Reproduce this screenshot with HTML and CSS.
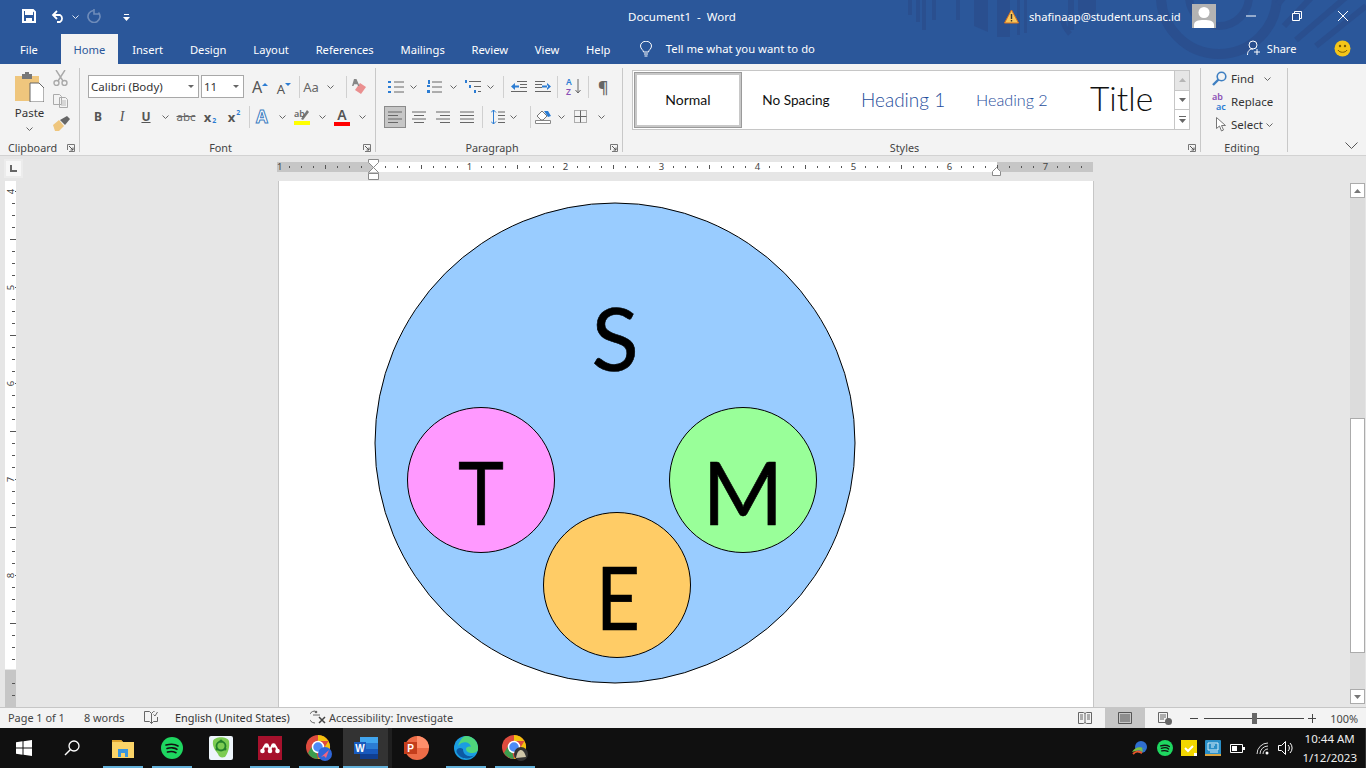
FILE: index.html
```html
<!DOCTYPE html>
<html lang="en">
<head>
  <meta charset="UTF-8" />
  <title>Document1 - Word</title>
  <link rel="stylesheet" href="styles.css">
</head>
<body>
  <svg class="sprite">
    <symbol id="chev" viewBox="0 0 7 4"><path d="M.5.5l3 3 3-3" fill="none" stroke="#666"/></symbol>
    <symbol id="launch" viewBox="0 0 8 8"><path d="M.5 6V.5H7.500V7.500H2" fill="none" stroke="#777"/><path d="M2 2l4 4M6 3.500V6H3.500" fill="none" stroke="#555"/></symbol>
    <symbol id="lines" viewBox="0 0 14 12"><path d="M0 1h14M0 4.500h14M0 8h14M0 11.500h14" stroke="#666"/></symbol>
  </svg>

  <!-- title bar + tabs -->
  <header class="top">
    <svg class="top-art" viewBox="0 0 1366 64">
      <g fill="#2a4f8f">
        <path d="M908 0h4v15h-4zM916 0h4v22h-4zM922 0h4v30h-4zM932 0h4v20h-4zM956 0h4v20h-4zM974 0h14v32l-14-6zM997 0h13v37h-13zM1017 0h3v35h-3zM1024 0h3v33h-3zM1068 0h6v30h-6z"/>
        <path d="M1078 0h18v10a9 9 0 0 1-18 0z"/>
      </g>
      <g fill="none" stroke="#2a4f8f">
        <circle cx="1219" cy="-4" r="58" stroke-width="10"/>
        <circle cx="1219" cy="-4" r="30" stroke-width="8"/>
        <path d="M1296 40l70-60M1284 26l44-46M1316 46l50-40M1290-10l-12 14" stroke-width="6"/>
        <path d="M1062 16a30 30 0 0 0 8 18" stroke-width="5"/>
      </g>
    </svg>
    <div class="titlebar">
      <div class="qat">
        <svg class="q-save" width="14" height="14" viewBox="0 0 14 14"><path d="M1 1h10l2 2v10H1z" fill="none" stroke="#fff" stroke-width="2"/><path d="M3 2h8v4H3zM4 9h6v4H4z" fill="#fff"/></svg>
        <svg class="q-undo" width="14" height="13" viewBox="0 0 14 13"><path d="M2 5h7a4 4 0 0 1 0 7H6" fill="none" stroke="#fff" stroke-width="1.800"/><path d="M6 1L2 5l4 4" fill="none" stroke="#fff" stroke-width="1.800"/></svg>
        <svg class="q-chev" width="7" height="4"><path d="M.5.500l3 3 3-3" fill="none" stroke="#dfe6f2"/></svg>
        <svg class="q-redo" width="14" height="14" viewBox="0 0 14 14"><path d="M11.500 3.500a6 6 0 1 1-5-2" fill="none" stroke="#6f8cba" stroke-width="1.600"/><path d="M7 0v5h5" fill="none" stroke="#6f8cba" stroke-width="1.600"/></svg>
        <svg class="q-more" width="7" height="7" viewBox="0 0 7 7"><path d="M1 0h5v1H1zM0 3h7L3.500 7z" fill="#fff"/></svg>
      </div>
      <div class="doc-title">Document1&nbsp; -&nbsp; Word</div>
      <div class="account">
        <svg class="warn" width="15" height="15" viewBox="0 0 15 15"><path d="M7.500 1L14.500 14H.5z" fill="#f6c65b" stroke="#d9731f"/><path d="M6.800 5h1.400v5H6.800zM6.800 11h1.400v1.500H6.800z" fill="#333"/></svg>
        <span class="email">shafinaap@student.uns.ac.id</span>
        <div class="avatar"><svg width="24" height="24" viewBox="0 0 24 24"><circle cx="12" cy="8.500" r="5.500" fill="#fff"/><path d="M2 24v-3c0-4 4-5 10-5s10 1 10 5v3z" fill="#fff"/></svg></div>
        <div class="winbtns">
          <svg width="10" height="10" viewBox="0 0 10 10"><path d="M0 5h10" stroke="#fff"/></svg>
          <svg width="10" height="10" viewBox="0 0 10 10"><path d="M.5 2.500h7v7h-7zM2.500 2.500v-2h7v7h-2" fill="none" stroke="#fff"/></svg>
          <svg width="10" height="10" viewBox="0 0 10 10"><path d="M0 0l10 10M10 0L0 10" stroke="#fff"/></svg>
        </div>
      </div>
    </div>
    <nav class="tabs">
      <span class="tab tab-file">File</span>
      <span class="tab tab-on">Home</span>
      <span class="tab">Insert</span>
      <span class="tab">Design</span>
      <span class="tab">Layout</span>
      <span class="tab">References</span>
      <span class="tab">Mailings</span>
      <span class="tab">Review</span>
      <span class="tab">View</span>
      <span class="tab">Help</span>
      <svg class="bulb" width="14" height="16" viewBox="0 0 14 16"><path d="M4.500 11c0-2-3-3-3-6a5.500 4.800 0 0 1 11 0c0 3-3 4-3 6z" fill="none" stroke="#fff"/><path d="M5 13h4M5.500 15h3" stroke="#fff"/></svg>
      <span class="tell">Tell me what you want to do</span>
      <div class="share">
        <svg width="15" height="16" viewBox="0 0 15 16"><circle cx="6" cy="5" r="4" fill="none" stroke="#fff"/><path d="M.5 15c0-4 2-6 5.500-6M10 9v6M7 12h6" fill="none" stroke="#fff"/></svg>
        <span>Share</span>
      </div>
      <svg class="smile" width="17" height="17" viewBox="0 0 17 17"><circle cx="8.500" cy="8.500" r="8" fill="#f5c518"/><circle cx="6" cy="6" r="1.200" fill="#7a5a00"/><circle cx="11" cy="6" r="1.200" fill="#7a5a00"/><path d="M4 10c1.500 3 7.500 3 9 0" fill="none" stroke="#7a5a00"/></svg>
    </nav>
  </header>

  <!-- ribbon -->
  <section class="ribbon">
    <div class="group g-clip">
      <div class="gbody clip-body">
        <div class="paste">
          <svg width="29" height="30" viewBox="0 0 29 30"><path d="M0 4h24v25H0z" fill="#efc67d"/><path d="M7 2h10v5H7z" fill="#777"/><path d="M10 0h4v3h-4z" fill="#777"/><path d="M15 11h9l5 5v14H15z" fill="#fff" stroke="#666"/></svg>
          <span class="paste-lb">Paste</span>
          <svg width="7" height="4"><use href="#chev"/></svg>
        </div>
        <div class="clip-tools">
          <svg width="15" height="16" viewBox="0 0 15 16"><path d="M3 0l7 11M12 0L5 11" stroke="#a9a9a9" stroke-width="1.400"/><circle cx="3.500" cy="13" r="2.500" fill="none" stroke="#a9a9a9" stroke-width="1.400"/><circle cx="11.500" cy="13" r="2.500" fill="none" stroke="#a9a9a9" stroke-width="1.400"/></svg>
          <svg width="15" height="14" viewBox="0 0 15 14"><path d="M.5.500h6l2 2v8h-8zM6.500 3.500h6l2 2v8h-8z" fill="#f3f3f3" stroke="#aaa"/><path d="M8 7h5M8 9h5M8 11h5" stroke="#bbb"/></svg>
          <svg width="17" height="15" viewBox="0 0 17 15"><path d="M0 9l6-5 5 6-5 5H2z" fill="#efc67d"/><path d="M7 4l7-4 3 3-5 6z" fill="#666"/></svg>
        </div>
      </div>
      <div class="glabel"><span>Clipboard</span><svg width="8" height="8"><use href="#launch"/></svg></div>
    </div>

    <div class="group g-font">
      <div class="gbody">
        <div class="row font1">
          <div class="combo combo-font"><span>Calibri (Body)</span><i class="drop"></i></div>
          <div class="combo combo-size"><span>11</span><i class="drop"></i></div>
          <div class="btn w24 m4 glyph-a">A<sup class="up"></sup></div>
          <div class="btn w24 glyph-a small">A<sup class="dn"></sup></div>
          <i class="sep"></i>
          <div class="btn w22 aa">Aa</div>
          <svg class="cv" width="7" height="4"><use href="#chev"/></svg>
          <i class="sep m12"></i>
          <div class="btn w24">
            <svg width="16" height="16" viewBox="0 0 16 16"><path d="M9 4l6 4-5 7-6-4z" fill="#ea8f8f"/><path d="M3 0h2.500l3 7H7L6.300 5.300H3.200L2.500 7H1z" fill="#888"/></svg>
          </div>
        </div>
        <div class="row row2 font2">
          <div class="btn w24 bold">B</div>
          <div class="btn w24 ital">I</div>
          <div class="btn w24 und">U</div>
          <svg class="cv cv-n" width="7" height="4"><use href="#chev"/></svg>
          <div class="btn w24 strike">abc</div>
          <div class="btn w24 bold subx">x<sub>2</sub></div>
          <div class="btn w24 bold subx">x<sup>2</sup></div>
          <i class="sep"></i>
          <div class="btn w24 fx">A</div>
          <svg class="cv" width="7" height="4"><use href="#chev"/></svg>
          <div class="btn w24 m4">
            <svg width="16" height="17" viewBox="0 0 16 17"><path d="M0 13h16v4H0z" fill="#ffff00"/><path d="M7 11L13 2l2 2-6 8z" fill="#777"/><text x="0" y="9" class="ic-ab">ab</text></svg>
          </div>
          <svg class="cv" width="7" height="4"><use href="#chev"/></svg>
          <div class="btn w24 m4 colora">A<i></i></div>
          <svg class="cv" width="7" height="4"><use href="#chev"/></svg>
        </div>
      </div>
      <div class="glabel"><span>Font</span><svg width="8" height="8"><use href="#launch"/></svg></div>
    </div>

    <div class="group g-para">
      <div class="gbody">
        <div class="row para1">
          <svg class="p-ic" width="16" height="14" viewBox="0 0 16 14"><path d="M0 1h3v2H0zM0 6h3v2H0zM0 11h3v2H0z" fill="#2b7cd3"/><path d="M6 2h10M6 7h10M6 12h10" stroke="#666"/></svg>
          <svg class="cv cv6" width="7" height="4"><use href="#chev"/></svg>
          <svg class="p-ic m10" width="15" height="14" viewBox="0 0 15 14"><path d="M1 0h2v4H1zM0 5h3v2H0zM0 10h3v3H0z" fill="#2b7cd3"/><path d="M5 2h10M5 7h10M5 12h10" stroke="#666"/></svg>
          <svg class="cv m8" width="7" height="4"><use href="#chev"/></svg>
          <svg class="p-ic m8" width="17" height="14" viewBox="0 0 17 14"><path d="M0 0h2v3H0zM4 5h2v3H4zM9 10h2v3H9z" fill="#2b7cd3"/><path d="M4 1.500h12M9 6.500h7M13 11.500h3" stroke="#666"/></svg>
          <svg class="cv" width="7" height="4"><use href="#chev"/></svg>
          <i class="sep m9"></i>
          <svg class="p-ic m7" width="16" height="14" viewBox="0 0 16 14"><path d="M6 2h10M9 5h7M9 8h7M0 12h16" stroke="#666" transform="translate(0 -.5)"/><path d="M0 6.500l4-3.500v7zM3 5.500h5v2H3z" fill="#2b7cd3"/></svg>
          <svg class="p-ic m8" width="16" height="14" viewBox="0 0 16 14"><path d="M0 2h10M0 5h7M0 8h7M0 12h16" stroke="#666" transform="translate(0 -.5)"/><path d="M16 6.500L12 3v7zM7 5.500h6v2H7z" fill="#2b7cd3"/></svg>
          <i class="sep m6"></i>
          <div class="sort m8">
            <span class="sort-a">A</span><span class="sort-z">Z</span>
            <svg width="6" height="15" viewBox="0 0 6 15"><path d="M3 0v14M.5 11L3 14l2.500-3" fill="none" stroke="#666"/></svg>
          </div>
          <i class="sep m7"></i>
          <span class="pil">¶</span>
        </div>
        <div class="row row2 para2">
          <div class="al-on"><svg width="14" height="12"><path d="M0 1h14M0 4.500h10M0 8h14M0 11.500h10" stroke="#666"/></svg></div>
          <svg class="al" width="14" height="12"><path d="M0 1h14M2 4.500h10M0 8h14M2 11.500h10" stroke="#666"/></svg>
          <svg class="al" width="14" height="12"><path d="M0 1h14M4 4.500h10M0 8h14M4 11.500h10" stroke="#666"/></svg>
          <svg class="al" width="14" height="12"><use href="#lines"/></svg>
          <i class="sep m8"></i>
          <svg class="p-ic m8" width="14" height="16" viewBox="0 0 14 16"><path d="M2.500 1v14M0 3.500L2.500 1 5 3.500" stroke="#2b7cd3" fill="none"/><path d="M0 12.500L2.500 15 5 12.500" fill="none" stroke="#2b7cd3"/><path d="M7 3h7M7 6.500h7M7 10h7M7 13.500h7" stroke="#666"/></svg>
          <svg class="cv" width="7" height="4"><use href="#chev"/></svg>
          <i class="sep m13"></i>
          <svg class="p-ic m4" width="16" height="15" viewBox="0 0 16 15"><path d="M.5 11.500h15v3H.5z" fill="#fff" stroke="#888"/><path d="M2 7l5-5 5 5-4 4H6z" fill="#fff" stroke="#777"/><path d="M9 2h4l3 5-3 1z" fill="#2b7cd3"/></svg>
          <svg class="cv m7" width="7" height="4"><use href="#chev"/></svg>
          <svg class="p-ic m9" width="13" height="13" viewBox="0 0 13 13"><path d="M.5.500h12v12H.5z" fill="none" stroke="#666" stroke-dasharray="1 1"/><path d="M6.500.5v12M.5 6.500h12" stroke="#666"/></svg>
          <svg class="cv m11" width="7" height="4"><use href="#chev"/></svg>
        </div>
      </div>
      <div class="glabel"><span>Paragraph</span><svg width="8" height="8"><use href="#launch"/></svg></div>
    </div>

    <div class="group g-styles">
      <div class="gallery">
        <div class="st st-normal">Normal</div>
        <div class="st st-nospace">No Spacing</div>
        <div class="st st-h1">Heading 1</div>
        <div class="st st-h2">Heading 2</div>
        <div class="st st-title">Title</div>
        <div class="gal-scroll">
          <span class="gs gs-off"><svg width="7" height="4"><path d="M0 4h7L3.500 0z" fill="#b5b5b5"/></svg></span>
          <span class="gs"><svg width="7" height="4"><path d="M0 0h7L3.500 4z" fill="#666"/></svg></span>
          <span class="gs"><svg width="7" height="7"><path d="M0 .5h7" stroke="#666"/><path d="M0 3h7L3.500 7z" fill="#666"/></svg></span>
        </div>
      </div>
      <div class="glabel"><span>Styles</span><svg width="8" height="8"><use href="#launch"/></svg></div>
    </div>

    <div class="group g-edit">
      <div class="gbody edit-body">
        <div class="ed-row">
          <svg width="15" height="15" viewBox="0 0 15 15"><circle cx="9.500" cy="5.500" r="4.300" fill="none" stroke="#3f7fc1" stroke-width="1.600"/><path d="M6.500 8.500L1 14" stroke="#3f7fc1" stroke-width="2.400"/></svg>
          <span>Find</span><svg class="ed-cv" width="7" height="4"><use href="#chev"/></svg>
        </div>
        <div class="ed-row">
          <span class="abac"><b class="ab">ab</b><b class="ac">ac</b></span>
          <span>Replace</span>
        </div>
        <div class="ed-row">
          <svg class="ed-sel" width="10" height="15" viewBox="0 0 10 15"><path d="M.5.500v11l3-2.500 2 5 2-1-2-4.500h4z" fill="#fff" stroke="#777"/></svg>
          <span>Select</span><svg class="ed-cv2" width="7" height="4"><use href="#chev"/></svg>
        </div>
      </div>
      <div class="glabel"><span>Editing</span></div>
    </div>
    <svg class="collapse" width="13" height="7" viewBox="0 0 13 7"><path d="M.5.500l6 6 6-6" fill="none" stroke="#555"/></svg>
  </section>

  <!-- document area -->
  <main class="workspace">
    <div class="ruler-row">
      <div class="tabstop"><i></i></div>
      <div class="hruler">
        <div class="hr-grey hr-grey-l"></div>
        <div class="hr-white"></div>
        <div class="hr-grey hr-grey-r"></div>
        <span class="rn n0">1</span><span class="rn n1">1</span><span class="rn n2">2</span><span class="rn n3">3</span>
        <span class="rn n4">4</span><span class="rn n5">5</span><span class="rn n6">6</span><span class="rn n7">7</span>
        <svg class="ind-l" width="11" height="21" viewBox="0 0 11 21"><path d="M.5.500h10v3L5.500 8.500.5 3.500zM5.500 8.500l5 5v.5H.5v-.5zM.5 14.500h10v6H.5z" fill="#fff" stroke="#8a8a8a"/></svg>
        <svg class="ind-r" width="9" height="9" viewBox="0 0 9 9"><path d="M4.500.5l4 4v4h-8v-4z" fill="#fff" stroke="#8a8a8a"/></svg>
      </div>
    </div>
    <div class="doc-row">
      <div class="vruler">
        <div class="vr-white">
          <span class="vn v4">4</span><span class="vn v5">5</span><span class="vn v6">6</span><span class="vn v7">7</span><span class="vn v8">8</span>
        </div>
        <div class="vr-grey"></div>
      </div>
      <div class="page">
        <svg class="stem" viewBox="279 181 814 526" width="814" height="526">
          <circle cx="615" cy="443" r="240" fill="#99ccff" stroke="#000"/>
          <ellipse cx="481" cy="480" rx="73.500" ry="72.500" fill="#ff99ff" stroke="#000"/>
          <ellipse cx="743" cy="480" rx="73.500" ry="72.500" fill="#99ff99" stroke="#000"/>
          <ellipse cx="617" cy="585" rx="73.500" ry="72.500" fill="#ffcc66" stroke="#000"/>
          <text x="615" y="371" class="letter">S</text>
          <text x="481" y="525" class="letter" textLength="46" lengthAdjust="spacingAndGlyphs">T</text>
          <text x="743" y="525" class="letter">M</text>
          <text x="618" y="630" class="letter" textLength="44" lengthAdjust="spacingAndGlyphs">E</text>
        </svg>
      </div>
      <div class="scrollbar">
        <span class="sb-btn"><svg width="7" height="4"><path d="M0 4h7L3.500 0z" fill="#777"/></svg></span>
        <div class="sb-track"><div class="sb-thumb"></div></div>
        <span class="sb-btn"><svg width="7" height="4"><path d="M0 0h7L3.500 4z" fill="#777"/></svg></span>
      </div>
    </div>
  </main>

  <!-- status bar -->
  <footer class="status">
    <span class="s-page">Page 1 of 1</span>
    <span class="s-words">8 words</span>
    <svg class="s-book" width="14" height="13" viewBox="0 0 14 13"><path d="M.5.500h5l2 2v10l-2-2h-5zM7.500 2.500l2-2h1M13.500 6v4.500h-4l-2 2" fill="none" stroke="#666"/><path d="M9.500 3.500l1.500 1.500 2.500-4" fill="none" stroke="#666"/></svg>
    <span class="s-lang">English (United States)</span>
    <svg class="s-acc" width="16" height="14" viewBox="0 0 16 14"><path d="M5 1a6 6 0 0 0 0 12" fill="none" stroke="#666"/><circle cx="6" cy="2" r="1.300" fill="#666"/><path d="M3 5h7" stroke="#666"/><path d="M9 7l6 6M15 7l-6 6" stroke="#444" stroke-width="1.500"/></svg>
    <span class="s-acc-t">Accessibility: Investigate</span>
    <div class="s-right">
      <svg class="v-read" width="14" height="12" viewBox="0 0 14 12"><path d="M.5.500h5l1.500 1 1.500-1h5v11h-5L7 10.500 5.500 11.500h-5zM7 1.500v9M2 3h3M2 5h3M2 7h3M9 3h3M9 5h3M9 7h3" fill="none" stroke="#666"/></svg>
      <div class="v-print"><svg width="14" height="12" viewBox="0 0 14 12"><path d="M.5.500h13v11H.5zM2 3h10M2 5h10M2 7h10M2 9h10" fill="none" stroke="#555"/></svg></div>
      <svg class="v-web" width="14" height="13" viewBox="0 0 14 13"><path d="M.5.500h9v10h-9zM2 3h6M2 5h6M2 7h4" fill="none" stroke="#666"/><circle cx="10.500" cy="9.500" r="3.500" fill="#666"/></svg>
      <span class="z-minus"></span>
      <div class="z-track"><i></i></div>
      <span class="z-plus"></span>
      <span class="z-val">100%</span>
    </div>
  </footer>

  <!-- taskbar -->
  <div class="taskbar">
    <div class="tb-sys">
      <svg width="16" height="16" viewBox="0 0 16 16"><path d="M0 2.300l6.500-1v6.300H0zM7.500 1.200L16 0v7.600H7.500zM0 8.500h6.500v6.300l-6.500-1zM7.500 8.500H16V16l-8.500-1.200z" fill="#fff"/></svg>
    </div>
    <div class="tb-sys">
      <svg width="16" height="16" viewBox="0 0 16 16"><circle cx="10" cy="6" r="5" fill="none" stroke="#fff" stroke-width="1.300"/><path d="M6.500 9.500L1 15" stroke="#fff" stroke-width="1.500"/></svg>
    </div>
    <div class="tb-app run">
      <svg width="22" height="20" viewBox="0 0 22 20"><path d="M0 2h9l2 2h11v16H0z" fill="#fbd467"/><path d="M0 2h9l2 2H0z" fill="#e0a52e"/><path d="M6 11h10v8h-3v-4H9v4H6z" fill="#3a96dd"/></svg>
    </div>
    <div class="tb-app run">
      <svg width="22" height="22" viewBox="0 0 22 22"><circle cx="11" cy="11" r="11" fill="#1ed760"/><path d="M5 8c4-1 9-1 12 1M6 11.500c3-1 8-1 10 .8M6.500 15c3-.8 6-.6 8.500.7" fill="none" stroke="#111" stroke-width="1.600" stroke-linecap="round"/></svg>
    </div>
    <div class="tb-app">
      <svg width="24" height="24" viewBox="0 0 24 24"><rect width="24" height="24" rx="2" fill="#eef5fb"/><path d="M4 5c2-5 14-5 16 0 1 6-1 12-4 16-4 1-6 0-7-3-2-3-6-7-5-13z" fill="#7ccc52"/><circle cx="12" cy="10" r="4.500" fill="none" stroke="#23812b" stroke-width="1.800"/><circle cx="12" cy="5" r="1.500" fill="#23812b"/><circle cx="8" cy="13" r="1.500" fill="#23812b"/><circle cx="16" cy="13" r="1.500" fill="#23812b"/></svg>
    </div>
    <div class="tb-app run">
      <svg width="24" height="24" viewBox="0 0 24 24"><path d="M0 0h24v24H0z" fill="#a6112c"/><path d="M4.500 15c1-4 2.500-6 4-6S11 11 12 15c1-4 2-6 3.500-6s3 2 4 6" fill="none" stroke="#fff" stroke-width="2"/><circle cx="4.500" cy="15" r="2.300" fill="#fff"/><circle cx="12" cy="15" r="2.300" fill="#fff"/><circle cx="19.500" cy="15" r="2.300" fill="#fff"/><circle cx="8.500" cy="9.500" r="2.300" fill="#fff"/><circle cx="15.500" cy="9.500" r="2.300" fill="#fff"/></svg>
    </div>
    <div class="tb-app run">
      <svg width="26" height="26" viewBox="0 0 26 26"><circle cx="12" cy="12" r="12" fill="#dd4b3e"/><path d="M12 0a12 12 0 0 1 10.400 6H12z" fill="#f4c20d"/><path d="M2 18L8 8l4 16a12 12 0 0 1-10-6z" fill="#3c9d4e"/><path d="M22.400 6a12 12 0 0 1-10.400 18l5-9z" fill="#f4c20d"/><circle cx="12" cy="12" r="5.500" fill="#4c8bf5" stroke="#fff" stroke-width="1.500"/><circle cx="19" cy="19" r="7" fill="#2f66d8"/><path d="M15 22l8-7-3 8-2-2z" fill="#f2637e"/></svg>
    </div>
    <div class="tb-app run active">
      <svg width="24" height="22" viewBox="0 0 24 22"><path d="M6 0h18v22H6z" fill="#2b7cd3"/><path d="M6 0h18v6H6z" fill="#41a5ee"/><path d="M6 12h18v5H6z" fill="#185abd"/><path d="M6 17h18v5H6z" fill="#103f91"/><path d="M0 5h12v12H0z" fill="#185abd"/><text x="6" y="14.500" class="ic-l ic-w">W</text></svg>
    </div>
    <div class="tb-app">
      <svg width="25" height="24" viewBox="0 0 25 24"><circle cx="13" cy="12" r="12" fill="#ed6c47"/><path d="M13 0a12 12 0 0 1 12 12H13z" fill="#ff8f6b"/><path d="M0 6h13v12H0z" fill="#c43e1c"/><text x="6.500" y="15.500" class="ic-l ic-p">P</text></svg>
    </div>
    <div class="tb-app run">
      <svg width="24" height="24" viewBox="0 0 24 24"><circle cx="12" cy="12" r="12" fill="#1b9de2"/><path d="M12 0a12 12 0 0 1 12 13c0 3-3 4-6 4-4 0-6-2-6-4 0-2 3-3 5-2-1-5-8-7-13-1C6 4 9 0 12 0z" fill="#4fd67c"/><path d="M9 13c0 5 4 8 9 7 1 0 2-.5 3-1.500C18 23 8 25 3 17c-2-3 2-7 6-4z" fill="#0c59a4"/></svg>
    </div>
    <div class="tb-app run">
      <svg width="26" height="26" viewBox="0 0 26 26"><circle cx="12" cy="12" r="12" fill="#dd4b3e"/><path d="M12 0a12 12 0 0 1 10.400 6H12z" fill="#f4c20d"/><path d="M2 18L8 8l4 16a12 12 0 0 1-10-6z" fill="#3c9d4e"/><path d="M22.400 6a12 12 0 0 1-10.400 18l5-9z" fill="#f4c20d"/><circle cx="12" cy="12" r="5.500" fill="#4c8bf5" stroke="#fff" stroke-width="1.500"/><circle cx="19" cy="19" r="7" fill="#333"/><path d="M14 23c1-6 3-8 5-8s4 3 5 7z" fill="#cfc6a8"/></svg>
    </div>
    <div class="tray">
      <svg width="17" height="15" viewBox="0 0 17 15"><circle cx="9" cy="6" r="6" fill="#2f6fd0"/><path d="M0 11c3-5 8-6 13-3l-3-1 1 4-4-2z" fill="#7bc043"/><path d="M1 13c3-3 5-3 9-1" fill="none" stroke="#e8562a" stroke-width="2"/></svg>
      <svg width="16" height="16" viewBox="0 0 22 22"><circle cx="11" cy="11" r="11" fill="#1ed760"/><path d="M5 8c4-1 9-1 12 1M6 11.500c3-1 8-1 10 .8M6.500 15c3-.8 6-.6 8.500.7" fill="none" stroke="#111" stroke-width="1.800" stroke-linecap="round"/></svg>
      <svg width="16" height="16" viewBox="0 0 16 16"><path d="M0 0h16v16H0z" fill="#f2d600"/><path d="M4 8l3 3 5-5" fill="none" stroke="#fff" stroke-width="2"/><path d="M13 13h3v3h-3z" fill="#fff"/></svg>
      <svg width="16" height="16" viewBox="0 0 16 16"><rect width="16" height="16" rx="1" fill="#2a8fc7"/><path d="M3 3h10v7H3z" fill="none" stroke="#d6eef9"/><path d="M5 12h8M6 5h4M6 7h3" stroke="#d6eef9"/><path d="M0 14h16v2H0z" fill="#d9a441"/></svg>
      <svg class="t-batt" width="15" height="9" viewBox="0 0 15 9"><path d="M.5.500h12v8H.5z" fill="none" stroke="#fff"/><path d="M2 2h5v5H2z" fill="#fff"/><path d="M13 3h2v3h-2z" fill="#fff"/></svg>
      <svg class="t-wifi" width="14" height="13" viewBox="0 0 14 13"><path d="M1 12A11 11 0 0 1 12 1M4 12a8 8 0 0 1 8-8M7 12a5 5 0 0 1 5-5" fill="none" stroke="#ddd"/><circle cx="11" cy="11" r="1.500" fill="#fff"/></svg>
      <svg class="t-vol" width="16" height="14" viewBox="0 0 16 14"><path d="M.5 4.500h3l4-4v13l-4-4h-3z" fill="none" stroke="#fff"/><path d="M10 4a4 4 0 0 1 0 6M12 2a7 7 0 0 1 0 10" fill="none" stroke="#fff"/></svg>
      <div class="clock"><span>10:44 AM</span><span>1/12/2023</span></div>
    </div>
  </div>
</body>
</html>
```

FILE: styles.css
```css
/* whole window is a fixed 768 tall column */
html, body { margin: 0; padding: 0; }
body {
  width: 1366px; height: 768px;
  overflow: hidden;
  display: flex; flex-direction: column;
  font-family: "Noto Sans", "Open Sans", sans-serif;
  font-size: 12px;
  color: #444;
  background: #e6e6e6;
}
.sprite { width: 0; height: 0; position: absolute; }
svg { display: block; flex: none; }
i { display: block; }

/* title bar */
.top { position: relative; height: 64px; background: #2b579a; color: #fff; flex: none; }
.top-art { position: absolute; left: 0; top: 0; width: 1366px; height: 64px; }
.titlebar, .tabs { position: relative; display: flex; align-items: center; }
.titlebar { height: 32px; }
.qat { display: flex; align-items: center; width: 560px; }
.q-save { margin-left: 22px; }
.q-undo { margin-left: 15px; }
.q-chev { margin-left: 7px; margin-top: 2px; }
.q-redo { margin-left: 8px; }
.q-more { margin-left: 22px; margin-top: 2px; }
.doc-title { margin-left: 68px; width: 300px; font-size: 11.500px; color: #fff; }
.account { display: flex; align-items: center; margin-left: 76px; }
.warn { margin-right: 10px; }
.email { width: 163px; font-size: 11.200px; white-space: nowrap; }
.avatar { width: 24px; height: 24px; background: #b3b3b3; }
.winbtns { display: flex; gap: 36px; margin-left: 30px; }

/* tabs */
.tabs { height: 32px; align-items: flex-end; }
.tab { height: 30px; line-height: 31px; padding: 0 13.400px; color: #fff; white-space: nowrap; font-size: 11.200px; }
.tab-file { padding: 0 23px 0 20px; }
.tab-on { background: #f3f3f3; color: #2b579a; padding: 0 12.500px; margin-right: 1px; }
.bulb { margin: 0 13px 7px 15px; }
.tell { height: 30px; line-height: 29px; width: 581px; white-space: nowrap; font-size: 11.300px; }
.share { display: flex; gap: 5px; height: 30px; align-items: center; font-size: 11px; padding-bottom: 2px; box-sizing: border-box; }
.smile { margin: 0 0 7px 38px; }

/* ribbon */
.ribbon {
  display: flex; flex: none;
  height: 92px; box-sizing: border-box;
  padding-top: 4px;
  background: #f3f3f3;
  border-bottom: 1px solid #d2d2d2;
}
.group {
  display: flex; flex-direction: column;
  height: 84px; box-sizing: border-box;
  border-right: 1px solid #c8c8c8;
  flex: none;
}
.g-clip { width: 80px; }
.g-font { width: 296px; }
.g-para { width: 247px; }
.g-styles { width: 578px; }
.g-edit { width: 87px; }
.gbody { height: 72px; box-sizing: border-box; padding-top: 7px; flex: none; }
.glabel { display: flex; align-items: center; flex: none; height: 12px; margin-top: 2px; padding-right: 4px; font-size: 10.800px; color: #444; line-height: 12px; }
.glabel span { flex: 1; text-align: center; }
.glabel svg { margin-left: 2px; margin-right: 0; }

.clip-body { display: flex; padding-top: 4px; }
.paste { width: 53px; display: flex; flex-direction: column; align-items: center; padding-left: 6px; box-sizing: border-box; }
.paste-lb { margin-top: 3px; line-height: 16px; font-size: 11.500px; color: #333; }
.paste svg:last-child { margin-top: 6px; margin-left: 0; }
.clip-tools { display: flex; flex-direction: column; gap: 8px; margin-top: -2px; }

.row { display: flex; align-items: center; height: 23px; }
.row2 { margin-top: 7px; }
.font1 { padding-left: 8px; }
.font2 { padding-left: 6px; }
.combo {
  display: flex; align-items: center; justify-content: space-between;
  height: 23px; box-sizing: border-box;
  background: #fff; border: 1px solid #a8a8a8;
  padding: 0 4px 0 2px; color: #333; font-size: 11.500px;
}
.combo-font { width: 111px; }
.combo-size { width: 43px; margin-left: 2px; }
.drop { width: 0; height: 0; border: 3px solid transparent; border-top: 3px solid #666; border-bottom: 0; }

.btn { display: flex; align-items: center; justify-content: center; height: 22px; flex: none; color: #555; }
.w24 { width: 24px; }
.w22 { width: 22px; }
.m4 { margin-left: 4px; }
.m6 { margin-left: 6px; }
.m7 { margin-left: 7px; }
.m8 { margin-left: 8px; }
.m9 { margin-left: 9px; }
.m10 { margin-left: 10px; }
.m11 { margin-left: 11px; }
.m12 { margin-left: 12px; }
.m13 { margin-left: 13px; }
.sep { width: 1px; height: 22px; background: #d0d0d0; flex: none; margin-left: 3px; }
.sep.m6 { margin-left: 6px; }
.sep.m7 { margin-left: 7px; }
.sep.m8 { margin-left: 8px; }
.sep.m9 { margin-left: 9px; }
.sep.m12 { margin-left: 12px; }
.sep.m13 { margin-left: 13px; }
.cv { margin-left: 5px; }
.cv6 { margin-left: 6px; }
.cv.m7 { margin-left: 7px; }
.cv.m8 { margin-left: 8px; }
.cv.m11 { margin-left: 11px; }
.cv-n { margin-left: 4px; margin-right: 5px; }

.glyph-a { font-size: 16px; color: #555; align-items: flex-end; }
.glyph-a.small { font-size: 13px; }
.glyph-a sup { width: 0; height: 0; border: 3px solid transparent; margin-bottom: 12px; }
.up { border-bottom: 3px solid #2b7cd3 !important; border-top: 0 !important; }
.dn { border-top: 3px solid #2b7cd3 !important; border-bottom: 0 !important; }
.aa { font-size: 13px; color: #666; }

.bold { font-weight: 700; font-family: "Noto Sans", sans-serif; }
.ital { font-family: "Liberation Serif", serif; font-style: italic; font-size: 14px; }
.und { text-decoration: underline; font-weight: 700; }
.strike { text-decoration: line-through; color: #666; font-size: 11.500px; }
.subx { font-size: 13px; }
.subx sub, .subx sup { font-size: 7px; color: #2b7cd3; line-height: 8px; margin-left: 1px; }
.subx sub { margin-top: 8px; }
.subx sup { margin-bottom: 8px; }
.fx { font-size: 17px; font-weight: 700; color: #fff; -webkit-text-stroke: 1px #3f7fc1; }
.colora { flex-direction: column; font-size: 14px; font-weight: 600; line-height: 14px; }
.colora i { width: 16px; height: 4px; background: #ff0000; }
.ic-ab { font-family: "Noto Sans", sans-serif; font-size: 9px; font-weight: 600; fill: #666; }

.para1 { padding-left: 12px; }
.para2 { padding-left: 8px; }
.al { margin-left: 10px; }
.al:nth-child(2) { margin-left: 6px; }
.al-on { width: 22px; height: 22px; box-sizing: border-box; background: #c6c6c6; border: 1px solid #8a8a8a; display: flex; align-items: center; justify-content: center; }
.sort { position: relative; width: 15px; height: 20px; display: flex; align-items: center; justify-content: flex-end; font-size: 8.500px; line-height: 9px; font-weight: 600; }
.sort-a, .sort-z { position: absolute; left: 0; }
.sort-a { top: 0; color: #2b7cd3; }
.sort-z { top: 10px; color: #8a4fb5; }
.pil { margin-left: 9px; font-size: 16px; font-weight: 600; color: #666; line-height: 20px; }

/* style gallery */
.gallery {
  display: flex; align-items: center; flex: none;
  width: 558px; height: 60px; box-sizing: border-box;
  margin: 2px 0 10px 9px;
  background: #fff; border: 1px solid #c6c6c6;
  font-family: Lato, "Liberation Sans", sans-serif;
}
.st { white-space: nowrap; flex: none; text-align: center; }
.st-normal {
  width: 108px; height: 56px; box-sizing: border-box;
  margin-left: 1px;
  line-height: 50px; font-size: 14px; color: #111;
  background: #fff; border: 3px solid #c8c8c8; outline: 1px solid #9a9a9a; outline-offset: -1px;
}
.st-nospace { width: 108px; font-size: 13.600px; color: #111; }
.st-h1 { font-size: 19px; font-weight: 300; color: #1f4e9c; text-align: left; padding-left: 11px; box-sizing: border-box; width: 116px; margin-bottom: 2px; }
.st-h2 { width: 121px; font-size: 16.200px; font-weight: 300; color: #1f4e9c; text-align: left; margin-left: 10px; margin-bottom: 2px; }
.st-title { width: 84px; font-size: 33.500px; font-weight: 300; color: #111; text-align: left; margin-left: -7px; line-height: 36px; margin-bottom: 4px; }
.gal-scroll { margin-left: auto; width: 15px; align-self: stretch; display: flex; flex-direction: column; border-left: 1px solid #c6c6c6; }
.gs { flex: 1; display: flex; align-items: center; justify-content: center; border-top: 1px solid #c6c6c6; }
.gs:first-child { border-top: 0; }
.gs-off { background: #e6e6e6; }

/* editing group */
.edit-body { display: flex; flex-direction: column; padding-top: 0; }
.ed-row { display: flex; align-items: center; height: 23px; padding-left: 11px; color: #333; font-size: 11.500px; line-height: 16px; flex: none; }
.ed-row:first-child { margin-top: -1px; }
.ed-row span:not(.abac) { margin-left: 4px; }
.ed-cv { margin-left: 10px; }
.ed-cv2 { margin-left: 3px; }
.ed-sel { margin-left: 4px; margin-right: 1px; }
.abac { display: flex; flex-direction: column; width: 15px; font-size: 9px; line-height: 10px; font-weight: 600; }
.abac .ab { color: #8a4fb5; font-weight: 600; }
.abac .ac { color: #2b7cd3; font-weight: 600; margin-left: 4px; }
.collapse { margin: 74px 0 0 57px; }

/* rulers + page */
.workspace { flex: 1; min-height: 0; display: flex; flex-direction: column; background: #e6e6e6; }
.ruler-row { display: flex; height: 25px; flex: none; }
.tabstop {
  width: 15px; height: 15px; margin: 3px 0 0 4px;
  background: #f7f7f7; border: 2px solid #ececec;
  display: flex; align-items: center; justify-content: center;
}
.tabstop i { width: 5px; height: 5px; border-left: 2px solid #666; border-bottom: 2px solid #666; }
.hruler { position: relative; display: flex; margin: 6px 0 0 254px; height: 10px; width: 816px; }
.hruler::after {
  content: ""; position: absolute; left: 0; right: 0; top: 3px; height: 4px;
  background:
    repeating-linear-gradient(90deg, #555 0 1px, transparent 1px 48px) 0 0 / 100% 4px no-repeat,
    repeating-linear-gradient(90deg, #555 0 1px, transparent 1px 12px) 0 1px / 100% 2px no-repeat;
}
.hr-grey { width: 96px; background: #c6c6c6; }
.hr-white { flex: 1; background: #fff; }
.rn {
  position: absolute; top: 0; z-index: 1;
  width: 9px; margin-left: -4px; text-align: center;
  font-size: 9.500px; line-height: 10px; color: #444;
}
.n0 { left: 0; margin-left: 0; width: 6px; text-align: left; background: #c6c6c6; }
.n1 { left: 192px; background: #fff; }
.n2 { left: 288px; background: #fff; }
.n3 { left: 384px; background: #fff; }
.n4 { left: 480px; background: #fff; }
.n5 { left: 576px; background: #fff; }
.n6 { left: 672px; background: #fff; }
.n7 { left: 768px; background: #c6c6c6; }
.ind-l { position: absolute; left: 91px; top: -3px; z-index: 2; }
.ind-r { position: absolute; left: 715px; top: 5px; z-index: 2; }

.doc-row { flex: 1; min-height: 0; display: flex; }
.vruler { width: 11px; margin-left: 5px; display: flex; flex-direction: column; flex: none; }
.vr-white {
  flex: none; height: 488px; position: relative;
  background:
    repeating-linear-gradient(180deg, #555 0 1px, transparent 1px 48px) 5px 10px / 6px 100% no-repeat,
    repeating-linear-gradient(180deg, #555 0 1px, transparent 1px 12px) 7px 10px / 3px 100% no-repeat,
    #fff;
}
.vr-grey {
  flex: 1; margin-top: 1px;
  background:
    repeating-linear-gradient(180deg, #555 0 1px, transparent 1px 12px) 7px 13px / 3px 100% no-repeat,
    #c6c6c6;
}
.vn {
  position: absolute; left: 0; width: 11px; height: 9px;
  text-align: center; font-size: 9.500px; line-height: 9px;
  background: #fff; transform: rotate(-90deg); color: #444;
}
.v4 { top: 6px; }
.v5 { top: 102px; }
.v6 { top: 198px; }
.v7 { top: 294px; }
.v8 { top: 390px; }
.page {
  width: 814px; margin-left: 262px; flex: none;
  background: #fff;
  border-left: 1px solid #c6c6c6; border-right: 1px solid #c6c6c6;
}
.stem { width: 814px; height: 526px; }
.letter {
  font-family: Lato, "Liberation Sans", sans-serif; font-size: 87px;
  text-anchor: middle; fill: #000;
  stroke: #000; stroke-width: .6px; stroke-linejoin: round;
}
.scrollbar { width: 15px; margin: 2px 1px 3px auto; display: flex; flex-direction: column; background: #dcdcdc; }
.sb-btn { height: 15px; box-sizing: border-box; flex: none; background: #fff; border: 1px solid #ababab; display: flex; align-items: center; justify-content: center; }
.sb-track { flex: 1; padding-top: 220px; }
.sb-thumb { height: 235px; box-sizing: border-box; background: #fff; border: 1px solid #ababab; }

/* status bar */
.status {
  display: flex; align-items: center; flex: none;
  height: 21px; box-sizing: border-box;
  padding-bottom: 2px;
  background: #f3f3f3; border-top: 1px solid #c6c6c6;
  font-size: 10.900px; color: #444; white-space: nowrap;
}
.s-page { margin-left: 8px; width: 76px; }
.s-words { width: 60px; }
.s-book { margin-right: 17px; }
.s-lang { width: 135px; color: #333; }
.s-acc { margin-right: 3px; }
.s-right { display: flex; align-items: center; margin-left: auto; height: 20px; align-self: flex-start; }
.v-print { width: 40px; height: 20px; background: #c6c6c6; margin: 0 13px; display: flex; align-items: center; justify-content: center; }
.z-minus { width: 8px; height: 1px; background: #444; margin-left: 18px; }
.z-track { position: relative; width: 100px; height: 1px; background: #444; margin-left: 6px; }
.z-track i { position: absolute; left: 48px; top: -5px; width: 5px; height: 11px; background: #666; }
.z-plus { position: relative; width: 8px; height: 1px; background: #444; margin-left: 4px; }
.z-plus::after { content: ""; position: absolute; left: 3.500px; top: -4px; width: 1px; height: 9px; background: #444; }
.z-val { margin: 0 8px 0 14px; }

/* taskbar */
.taskbar { display: flex; height: 40px; flex: none; background: #101010; color: #fff; }
.tb-sys { width: 48px; display: flex; align-items: center; justify-content: center; }
.tb-sys + .tb-sys { margin-right: 2px; }
.tb-app { position: relative; width: 49px; display: flex; align-items: center; justify-content: center; }
.tb-app.run::after { content: ""; position: absolute; left: 4.500px; right: 4.500px; bottom: 0; height: 2px; background: #63b1da; }
.tb-app.active { background: #333; border-right: 4px solid #1f1f1f; box-sizing: border-box; }
.tb-app.active::after { left: 0; right: 0; }
.ic-l { font-family: "Liberation Sans", sans-serif; font-weight: 700; font-size: 10px; text-anchor: middle; fill: #fff; }
.tray { display: flex; align-items: center; gap: 8px; margin-left: auto; padding-right: 5px; border-right: 1px solid #333; }
.t-batt { margin-left: 1px; }
.t-wifi { margin-left: 3px; }
.clock { display: flex; flex-direction: column; align-items: center; margin-left: 0; padding-right: 3px; font-size: 11.500px; line-height: 19px; color: #eee; }
```
